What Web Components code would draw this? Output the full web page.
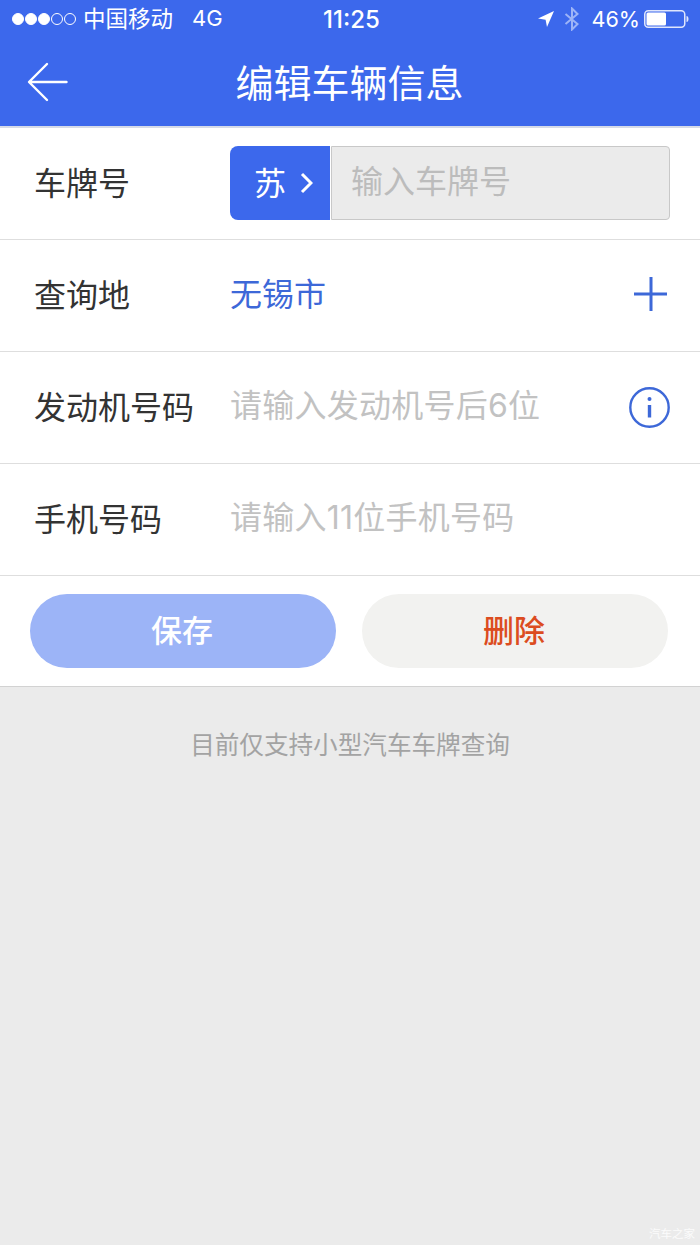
<!doctype html>
<html lang="zh">
<title>编辑车辆信息</title>
<style>
  html, body { margin: 0; height: 100%; background: #ebebeb; }
  body { font-family: "Noto Sans CJK SC", "Liberation Sans", sans-serif; }
  edit-page { height: 1245px; }
</style>

<script type="module">
  const BLUE = '#3c68ec';

  class StatusBar extends HTMLElement {
    connectedCallback() {
      this.attachShadow({mode: 'open'}).innerHTML = `
        <style>
          :host { display: grid; grid-template-columns: 1fr auto 1fr; align-items: center; height: 38px; padding: 0 10px 0 12px; color: #fff; font-size: 22.5px; font-family: Inter, "Noto Sans CJK SC", sans-serif; }
          .left, .right { display: flex; align-items: center; }
          .right { justify-content: flex-end; }
          .dots { display: flex; gap: 1px; margin-right: 7px; }
          .dots i { width: 12px; height: 12px; box-sizing: border-box; border-radius: 50%; border: 1px solid #fff; }
          .dots i.on { background: #fff; }
          .carrier { font-family: "Noto Sans CJK SC", sans-serif; margin-bottom: 4px; }
          .net { margin-left: 19px; font-size: 22px; margin-bottom: 2px; }
          .time { font-weight: 500; font-size: 24px; margin: 0 0 0 1px; }
          .pct { font-size: 21.600px; margin: 0 4px 0 11px; }
          svg { display: block; }
        </style>
        <div class="left">
          <div class="dots"><i class="on"></i><i class="on"></i><i class="on"></i><i></i><i></i></div>
          <span class="carrier">中国移动</span><span class="net">4G</span>
        </div>
        <span class="time">11:25</span>
        <div class="right">
          <svg width="18" height="18" viewBox="0 0 18 18" style="margin-right:9px"><path d="M17 1 1 8.500l7.600 1.200L10 17z" fill="#fff"/></svg>
          <svg width="16" height="24" viewBox="0 0 16 24" fill="none" stroke="#9db4f7" stroke-width="2"><path d="M1.500 7 13.500 17 8 22.500V1.500L13.500 7 1.500 17"/></svg>
          <span class="pct">46%</span>
          <svg width="46" height="18" viewBox="0 0 46 18"><rect x=".75" y=".75" width="40" height="16.500" rx="3.500" fill="none" stroke="#dfe6fc" stroke-width="1.500"/><rect x="2.500" y="2.500" width="19.500" height="13" rx="1.500" fill="#fff"/><path d="M42.500 6c1.500 0 2 1.500 2 3s-.5 3-2 3z" fill="#dfe6fc"/></svg>
        </div>`;
    }
  }
  customElements.define('status-bar', StatusBar);

  class NavBar extends HTMLElement {
    connectedCallback() {
      this.attachShadow({mode: 'open'}).innerHTML = `
        <style>
          :host { display: flex; align-items: center; height: 88px; position: relative; border-bottom: 2px solid #d5dbe8; }
          button { all: unset; position: absolute; left: 27px; top: 24px; width: 42px; height: 40px; }
          h1 { margin: 0 auto 2px; padding-right: 1px; color: #fff; font-size: 38px; font-weight: 400; line-height: 86px; }
          svg { display: block; }
        </style>
        <button aria-label="返回"><svg width="42" height="40" viewBox="0 0 42 40" fill="none" stroke="#fff" stroke-width="2.400" stroke-linecap="round" stroke-linejoin="round"><path d="M20 2 2 20l18 18M2.500 20H39.500"/></svg></button>
        <h1><slot></slot></h1>`;
    }
  }
  customElements.define('nav-bar', NavBar);

  class FormRow extends HTMLElement {
    connectedCallback() {
      this.attachShadow({mode: 'open'}).innerHTML = `
        <style>
          :host { display: flex; align-items: center; height: 111px; border-bottom: 1px solid #dedede; background: #fff; padding: 0 30px 0 34px; font-size: 32px; color: #333; }
          .label { width: 196px; flex: none; line-height: 1; margin-bottom: 6px; }
          .field { flex: 1; min-width: 0; display: flex; align-items: center; justify-content: space-between; }
        </style>
        <span class="label">${this.getAttribute('label')}</span>
        <div class="field"><slot></slot></div>`;
    }
  }
  customElements.define('form-row', FormRow);

  class PlateInput extends HTMLElement {
    connectedCallback() {
      this.attachShadow({mode: 'open'}).innerHTML = `
        <style>
          :host { display: flex; flex: 1; height: 74px; margin-bottom: 1px; font-size: 32px; }
          .province { width: 100px; display: flex; align-items: center; padding-left: 24px; gap: 14px; box-sizing: border-box; background: ${BLUE}; color: #fff; border-radius: 8px 0 0 8px; }
          .number { flex: 1; margin-left: 1px; display: flex; align-items: center; padding-left: 20px; background: #ebebeb; border: 1px solid #c8c8c8; border-radius: 0 4px 4px 0; color: #bcbcbc; box-sizing: border-box; }
          .province span { margin-bottom: 5px; }
          .number span { margin-bottom: 9px; margin-left: -1px; }
          svg { display: block; }
        </style>
        <div class="province"><span>${this.getAttribute('province')}</span>
          <svg width="13" height="22" viewBox="0 0 13 22" fill="none" stroke="#fff" stroke-width="3"><path d="M2 2l9 9-9 9"/></svg></div>
        <div class="number"><span>${this.getAttribute('placeholder')}</span></div>`;
    }
  }
  customElements.define('plate-input', PlateInput);

  class FieldText extends HTMLElement {
    connectedCallback() {
      this.attachShadow({mode: 'open'}).innerHTML = `
        <style>
          :host { display: block; font-family: Inter, "Noto Sans CJK SC", sans-serif; font-size: 32px; letter-spacing: .25px; line-height: 1; color: #c2c2c2; margin-bottom: 4px; }
          :host([value]) { color: #3d68d8; letter-spacing: 0; margin-bottom: 2px; }
        </style>
        <slot></slot>`;
    }
  }
  customElements.define('field-text', FieldText);

  class RowIcon extends HTMLElement {
    connectedCallback() {
      const icons = {
        plus: `<svg width="34" height="34" viewBox="0 0 34 34" stroke="#3d68d8" stroke-width="3" style="margin:0 2px 3px 0"><path d="M0 17H33M17 0V34"/></svg>`,
        info: `<svg width="41" height="41" viewBox="0 0 41 41" fill="none" stroke="#3d68d8"><circle cx="20.500" cy="20.500" r="19.200" stroke-width="2.400"/><circle cx="20.500" cy="12" r="2" fill="#3d68d8" stroke="none"/><path d="M20.500 18V30.500" stroke-width="3.400"/></svg>`
      };
      this.attachShadow({mode: 'open'}).innerHTML = `
        <style>:host { display: block; } svg { display: block; }</style>
        ${icons[this.getAttribute('name')]}`;
    }
  }
  customElements.define('row-icon', RowIcon);

  class ActionButton extends HTMLElement {
    connectedCallback() {
      this.attachShadow({mode: 'open'}).innerHTML = `
        <style>
          :host { display: flex; align-items: center; justify-content: center; width: 306px; height: 74px; padding: 0 2px 6px 0; box-sizing: border-box; border-radius: 37px; font-size: 31px; font-weight: 500; background: #9cb4f7; color: #fff; }
          :host([danger]) { background: #f2f2f0; color: #dc4c20; }
        </style>
        <slot></slot>`;
    }
  }
  customElements.define('action-button', ActionButton);

  class EditPage extends HTMLElement {
    connectedCallback() {
      this.attachShadow({mode: 'open'}).innerHTML = `
        <style>
          :host { display: flex; flex-direction: column; background: #ebebeb; }
          header { background: ${BLUE}; }
          .actions { display: flex; justify-content: space-between; padding: 18px 32px 18px 30px; background: #fff; border-bottom: 1px solid #d2d2d2; }
          .note { margin: 41px 0 0; text-align: center; font-size: 24.600px; line-height: 30px; color: #a3a3a3; }
          .mark { margin-top: auto; padding: 0 5px 5px 0; text-align: right; font-size: 11.500px; line-height: 14px; color: #fbfbfb; }
        </style>
        <header>
          <status-bar></status-bar>
          <nav-bar>编辑车辆信息</nav-bar>
        </header>
        <form-row label="车牌号"><plate-input province="苏" placeholder="输入车牌号"></plate-input></form-row>
        <form-row label="查询地"><field-text value>无锡市</field-text><row-icon name="plus"></row-icon></form-row>
        <form-row label="发动机号码"><field-text>请输入发动机号后6位</field-text><row-icon name="info"></row-icon></form-row>
        <form-row label="手机号码"><field-text>请输入11位手机号码</field-text></form-row>
        <div class="actions"><action-button>保存</action-button><action-button danger>删除</action-button></div>
        <p class="note">目前仅支持小型汽车车牌查询</p>
        <div class="mark">汽车之家</div>`;
    }
  }
  customElements.define('edit-page', EditPage);
</script>

<edit-page></edit-page>
</html>
